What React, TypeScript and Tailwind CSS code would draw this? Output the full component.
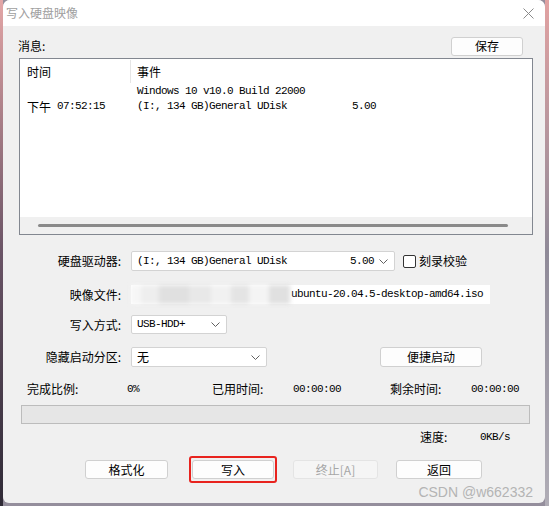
import type { ReactNode } from 'react'

const cjk = "font-['Microsoft_YaHei','Noto_Sans_CJK_SC',sans-serif]"
const mono = "font-['Liberation_Mono','Noto_Sans_CJK_SC',monospace] text-[11px] tracking-[-0.6px]"

function Btn({ children, className = '', disabled = false }: { children: ReactNode; className?: string; disabled?: boolean }) {
  return (
    <div
      className={`flex h-[19px] items-center justify-center rounded-[3px] border text-[12px] ${cjk} ${
        disabled ? 'border-[#e4e4e4] bg-[#f5f5f5] text-[#a6a6a6]' : 'border-[#d0d0d0] bg-[#fdfdfd] text-black'
      } ${className}`}
    >
      {children}
    </div>
  )
}

function Chevron() {
  return (
    <svg width="9" height="5" viewBox="0 0 9 5" className="shrink-0">
      <path d="M0.5 0.5 L4.5 4.5 L8.5 0.5" fill="none" stroke="#606060" strokeWidth="1" />
    </svg>
  )
}

function Select({ children, className = '' }: { children: ReactNode; className?: string }) {
  return (
    <div className={`flex items-center rounded-[2px] border border-[#d3d3d3] bg-white pl-[5px] pr-[6px] ${className}`}>
      <div className="flex flex-1 items-center">{children}</div>
      <Chevron />
    </div>
  )
}

export default function App() {
  return (
    <div className="flex h-[506px] w-[549px] overflow-hidden bg-[#948e9c]">
      <div className="w-[3px] bg-linear-to-b from-[#e4a6a6] via-[#6a5466] to-[#2f2a36]" />

      <div className="relative flex h-[503px] w-[542px] flex-col overflow-hidden rounded-t-[7px] rounded-b-[6px] bg-[#f0f0f0]">
        {/* title bar */}
        <div className="flex h-[26px] items-center justify-between bg-white pl-[3px] pr-[11px]">
          <span className={`text-[12px] text-[#a0a0a0] ${cjk}`}>写入硬盘映像</span>
          <svg width="11" height="11" viewBox="0 0 11 11">
            <path d="M0.5 0.5 L10.5 10.5 M10.5 0.5 L0.5 10.5" stroke="#8a8a8a" strokeWidth="1" />
          </svg>
        </div>

        {/* message header */}
        <div className="mt-[11px] flex h-[18px] items-center justify-between pl-[15px] pr-[22px]">
          <span className={`text-[12px] text-black ${cjk}`}>消息:</span>
          <Btn className="w-[72px]">保存</Btn>
        </div>

        {/* list view */}
        <div className="ml-[16px] mt-[3px] flex h-[177px] w-[514px] flex-col border border-[#828790] bg-white">
          <div className={`flex h-[25px] items-center text-[12px] text-black ${cjk}`}>
            <span className="w-[110px] pl-[7px]">时间</span>
            <div className="h-[23px] w-px bg-[#e5e5e5]" />
            <span className="pl-[6px]">事件</span>
          </div>
          <div className="flex h-[15px] items-center">
            <span className="w-[117px]" />
            <span className={mono}>Windows 10 v10.0 Build 22000</span>
          </div>
          <div className="flex h-[15px] items-center">
            <span className="flex w-[117px] items-center pl-[7px]">
              <span className={`text-[12px] ${cjk}`}>下午</span>
              <span className={`ml-[6px] ${mono}`}>07:52:15</span>
            </span>
            <span className={`w-[215px] ${mono}`}>(I:, 134 GB)General UDisk</span>
            <span className={mono}>5.00</span>
          </div>
          <div className="flex-1" />
          <div className="flex h-[17px] items-center bg-[#f0f0f0]">
            <div className="ml-[18px] h-[3px] w-[470px] rounded-full bg-[#8a8a8a]" />
          </div>
        </div>

        {/* drive */}
        <div className={`mt-[16px] flex h-[20px] items-center text-[12px] text-black ${cjk}`}>
          <span className="w-[118px] text-right">硬盘驱动器:</span>
          <Select className="ml-[10px] h-[20px] w-[264px]">
            <span className={`w-[213px] ${mono}`}>(I:, 134 GB)General UDisk</span>
            <span className={mono}>5.00</span>
          </Select>
          <div className="ml-[8px] h-[13px] w-[13px] rounded-[2px] border border-[#333] bg-white" />
          <span className="ml-[3px]">刻录校验</span>
        </div>

        {/* image file */}
        <div className={`mt-[14px] flex h-[19px] items-center text-[12px] text-black ${cjk}`}>
          <span className="w-[118px] text-right">映像文件:</span>
          <div className="ml-[10px] flex h-[19px] w-[359px] items-center bg-white">
            <div className="flex h-[19px] w-[159px] items-stretch overflow-hidden blur-[2px]">
              <div className="w-[10px] bg-[#f6f6f6]" />
              <div className="w-[18px] bg-[#eeeeee]" />
              <div className="w-[30px] bg-[#e0e0e0]" />
              <div className="w-[22px] bg-[#e8e8e8]" />
              <div className="w-[20px] bg-[#f1f1f1]" />
              <div className="w-[18px] bg-[#e4e4e4]" />
              <div className="w-[20px] bg-[#f4f4f4]" />
              <div className="w-[21px] bg-[#e0e0e0]" />
            </div>
            <span className={`ml-[1px] ${mono}`}>ubuntu-20.04.5-desktop-amd64.iso</span>
          </div>
        </div>

        {/* write mode */}
        <div className={`mt-[11px] flex h-[19px] items-center text-[12px] text-black ${cjk}`}>
          <span className="w-[118px] text-right">写入方式:</span>
          <Select className="ml-[10px] h-[19px] w-[96px]">
            <span className={mono}>USB-HDD+</span>
          </Select>
        </div>

        {/* hidden partition */}
        <div className={`mt-[13px] flex h-[20px] items-center text-[12px] text-black ${cjk}`}>
          <span className="w-[118px] text-right">隐藏启动分区:</span>
          <Select className="ml-[10px] h-[20px] w-[136px]">
            <span>无</span>
          </Select>
          <Btn className="ml-[113px] h-[20px] w-[102px]">便捷启动</Btn>
        </div>

        {/* stats */}
        <div className={`mt-[15px] flex h-[14px] items-center pl-[24px] text-[12px] text-black ${cjk}`}>
          <span className="w-[100px]">完成比例:</span>
          <span className={`w-[85px] ${mono}`}>0%</span>
          <span className="w-[81px]">已用时间:</span>
          <span className={`w-[97px] ${mono}`}>00:00:00</span>
          <span className="w-[81px]">剩余时间:</span>
          <span className={mono}>00:00:00</span>
        </div>

        {/* progress */}
        <div className="ml-[18px] mt-[9px] h-[19px] w-[509px] border border-[#bcbcbc] bg-[#e6e6e6]" />

        {/* speed */}
        <div className={`mt-[6px] flex h-[14px] items-center pl-[417px] text-[12px] text-black ${cjk}`}>
          <span className="w-[60px]">速度:</span>
          <span className={mono}>0KB/s</span>
        </div>

        {/* buttons */}
        <div className="mt-[12px] flex h-[27px] items-center pl-[82px]">
          <Btn className="w-[83px]">格式化</Btn>
          <div className="ml-[21px] rounded-[3px] border-2 border-[#e8231e] px-px py-[2px]">
            <Btn className="w-[82px]">写入</Btn>
          </div>
          <Btn disabled className="ml-[16px] w-[85px]">终止[A]</Btn>
          <Btn className="ml-[18px] w-[86px]">返回</Btn>
        </div>

        <span className="absolute bottom-0 right-[12px] font-['Liberation_Sans',sans-serif] text-[14px] text-[#b4b4b4]">
          CSDN @w662332
        </span>
      </div>

      <div className="w-[4px] bg-linear-to-b from-[#e2a2a2] via-[#8f8a98] to-[#b0adb6]" />
    </div>
  )
}
